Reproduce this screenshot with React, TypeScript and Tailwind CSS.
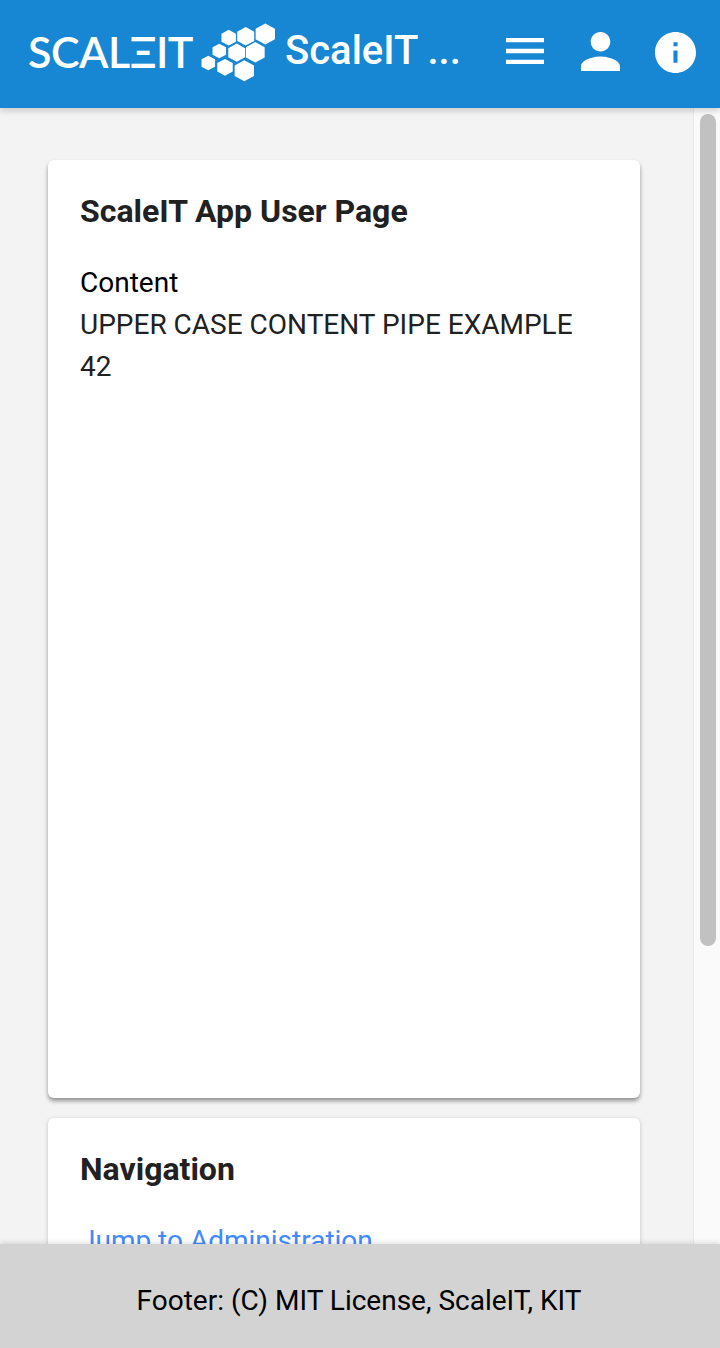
const HEXAGONS = [
  [265.3, 34, 10],
  [245.7, 36.3, 8.8],
  [228.7, 37.7, 7.5],
  [219.3, 51, 7],
  [236.7, 52.7, 8.7],
  [255.3, 52.3, 9.7],
  [208.3, 63, 7],
  [225, 67.3, 8],
  [244.3, 70.7, 10],
];

function hexPoints(cx: number, cy: number, size: number) {
  const r = size * 1.05;
  const w = r * 0.92;
  return [
    [cx, cy - r],
    [cx + w, cy - r / 2],
    [cx + w, cy + r / 2],
    [cx, cy + r],
    [cx - w, cy + r / 2],
    [cx - w, cy - r / 2],
  ]
    .map((p) => p.join(','))
    .join(' ');
}

function Logo() {
  return (
    <div className="flex items-center">
      <span className="w-[166px] -translate-x-[2px] text-[43px] font-semibold leading-none tracking-[-0.5px] text-white font-['Lato',sans-serif] whitespace-nowrap">
        SCALΞIT
      </span>
      <svg className="ml-[4px] mt-[2px]" width="80" height="60" viewBox="200 22 80 60" fill="white">
        {HEXAGONS.map(([x, y, r]) => (
          <polygon key={`${x}-${y}`} points={hexPoints(x, y, r)} />
        ))}
      </svg>
    </div>
  );
}

export default function App() {
  return (
    <div className="flex flex-col h-[1348px] w-[720px] overflow-hidden bg-[#f3f3f3] font-['Roboto',sans-serif]">
      <header className="relative z-10 flex h-[108px] shrink-0 items-center bg-[#1787d3] pb-[6px] pl-[30px] pr-[7px] shadow-[0_3px_6px_rgba(0,0,0,0.16)]">
        <Logo />
        <h1 className="ml-[5px] text-[40px] font-medium leading-none text-white whitespace-nowrap">ScaleIT ...</h1>
        <div className="ml-auto flex items-center">
          <div className="flex w-[75px] justify-center">
            <svg width="38" height="26" viewBox="3 6 18 12" preserveAspectRatio="none" fill="white">
              <path d="M3 18h18v-2H3v2zm0-5h18v-2H3v2zm0-7v2h18V6H3z" />
            </svg>
          </div>
          <div className="flex w-[75px] justify-center pl-[2px]">
            <svg width="39" height="39" viewBox="4 4 16 16" fill="white">
              <path d="M12 12c2.21 0 4-1.79 4-4s-1.79-4-4-4-4 1.79-4 4 1.79 4 4 4zm0 2c-2.67 0-8 1.34-8 4v2h16v-2c0-2.66-5.33-4-8-4z" />
            </svg>
          </div>
          <div className="flex w-[76px] justify-center">
            <svg className="mt-[2px]" width="41" height="41" viewBox="2 2 20 20" fill="white">
              <path d="M12 2C6.48 2 2 6.48 2 12s4.48 10 10 10 10-4.48 10-10S17.52 2 12 2zm1 15h-2v-6h2v6zm0-8h-2V7h2v2z" />
            </svg>
          </div>
        </div>
      </header>

      <div className="flex min-h-0 flex-1">
        <main className="min-w-0 flex-1 overflow-hidden pl-[48px] pr-[53px] pt-[52px]">
          <section className="h-[938px] rounded-[6px] bg-white px-[32px] pt-[32px] shadow-[0_3px_4px_rgba(0,0,0,0.4)]">
            <h2 className="text-[32px] font-bold leading-[38px] text-[#212121]">ScaleIT App User Page</h2>
            <div className="mt-[32px] text-[28px] leading-[42px] text-[#212121]">
              <div className="text-black">Content</div>
              <div>UPPER CASE CONTENT PIPE EXAMPLE</div>
              <div>42</div>
            </div>
          </section>
          <section className="mt-[20px] h-[300px] rounded-[6px] bg-white px-[32px] pt-[32px] shadow-[0_1px_4px_rgba(0,0,0,0.2)]">
            <h2 className="text-[32px] font-bold leading-[38px] text-[#212121]">Navigation</h2>
            <a className="mt-[32px] block text-[28px] leading-[42px] text-[#448aff]">Jump to Administration</a>
          </section>
        </main>
        <aside className="w-[27px] shrink-0 border-l border-[#e8e8e8] bg-[#fafafa] pl-[6px] pt-[6px]">
          <div className="h-[832px] w-[16px] rounded-full bg-[#c1c1c1]" />
        </aside>
      </div>

      <footer className="relative z-10 flex h-[104px] shrink-0 items-center justify-center bg-[#d3d3d3] pt-[10px] pr-[2px] text-[28px] text-black shadow-[0_-2px_4px_rgba(0,0,0,0.1)]">
        Footer: (C) MIT License, ScaleIT, KIT
      </footer>
    </div>
  );
}
